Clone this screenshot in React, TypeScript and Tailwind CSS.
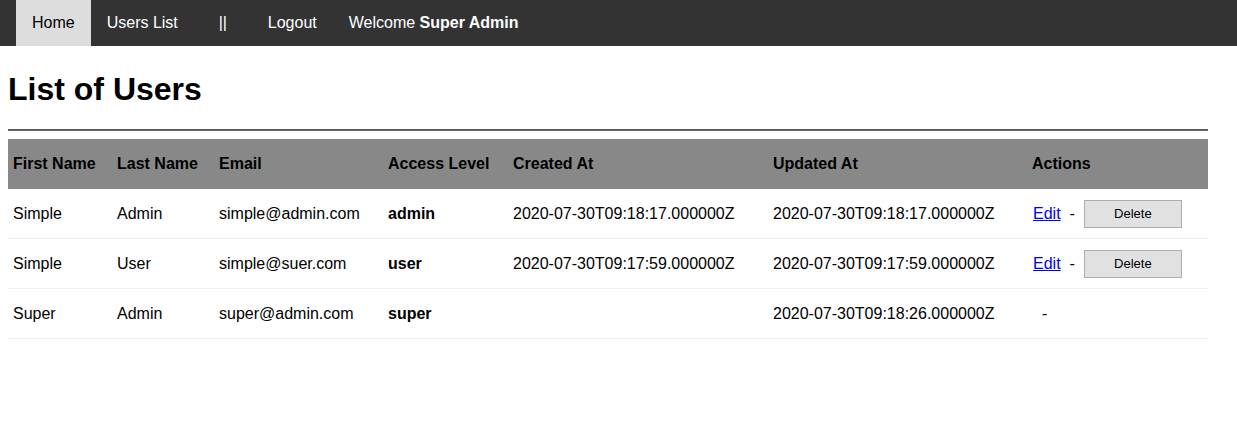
import React from "react";

const cols = "grid grid-cols-[104px_102px_169px_125px_260px_259px_181px]";

type Row = {
  first: string;
  last: string;
  email: string;
  level: string;
  created: string;
  updated: string;
  editable: boolean;
};

const rows: Row[] = [
  {
    first: "Simple",
    last: "Admin",
    email: "simple@admin.com",
    level: "admin",
    created: "2020-07-30T09:18:17.000000Z",
    updated: "2020-07-30T09:18:17.000000Z",
    editable: true,
  },
  {
    first: "Simple",
    last: "User",
    email: "simple@suer.com",
    level: "user",
    created: "2020-07-30T09:17:59.000000Z",
    updated: "2020-07-30T09:17:59.000000Z",
    editable: true,
  },
  {
    first: "Super",
    last: "Admin",
    email: "super@admin.com",
    level: "super",
    created: "",
    updated: "2020-07-30T09:18:26.000000Z",
    editable: false,
  },
];

export default function App() {
  return (
    <div className="w-[1237px] min-h-[429px] bg-white text-black font-['Liberation_Sans',Arial,sans-serif] text-[16px]">
      <nav className="h-[46px] bg-[#333333] flex items-stretch pl-4 text-white">
        <a className="flex items-center px-4 bg-[#dddddd] text-black">Home</a>
        <a className="flex items-center px-4">Users List</a>
        <span className="flex items-center justify-center w-[58px]">||</span>
        <a className="flex items-center px-4">Logout</a>
        <span className="flex items-center px-4">
          Welcome&nbsp;<b className="font-bold">Super Admin</b>
        </span>
      </nav>
      <div className="px-2">
        <h1 className="text-[32px] leading-[37px] font-bold mt-[25px] mb-[21px]">List of Users</h1>
        <div className="w-[1200px] border-t border-b border-t-[#555555] border-b-[#6a6a6a]" />
        <div className="w-[1200px] mt-2">
          <div className={`${cols} h-[50px] pb-px bg-[#888888] font-bold items-center`}>
            <div className="pl-[5px]">First Name</div>
            <div className="pl-[5px]">Last Name</div>
            <div className="pl-[5px]">Email</div>
            <div className="pl-[5px]">Access Level</div>
            <div className="pl-[5px]">Created At</div>
            <div className="pl-[5px]">Updated At</div>
            <div className="pl-[5px]">Actions</div>
          </div>
          {rows.map((r, i) => (
            <div key={i} className={`${cols} h-[50px] border-b border-[#eeeeee] items-center`}>
              <div className="pl-[5px]">{r.first}</div>
              <div className="pl-[5px]">{r.last}</div>
              <div className="pl-[5px]">{r.email}</div>
              <div className="pl-[5px] font-bold">{r.level}</div>
              <div className="pl-[5px]">{r.created}</div>
              <div className="pl-[5px]">{r.updated}</div>
              <div className="pl-[5px] flex items-center">
                {r.editable ? (
                  <>
                    <a className="text-[#0000ee] underline ml-px">Edit</a>
                    <span className="ml-[9px]">-</span>
                    <button className="ml-[9px] w-[98px] h-[28px] bg-[#e1e1e1] border border-[#adadad] text-[13px] text-black">
                      Delete
                    </button>
                  </>
                ) : (
                  <span className="ml-[10px]">-</span>
                )}
              </div>
            </div>
          ))}
        </div>
      </div>
    </div>
  );
}
